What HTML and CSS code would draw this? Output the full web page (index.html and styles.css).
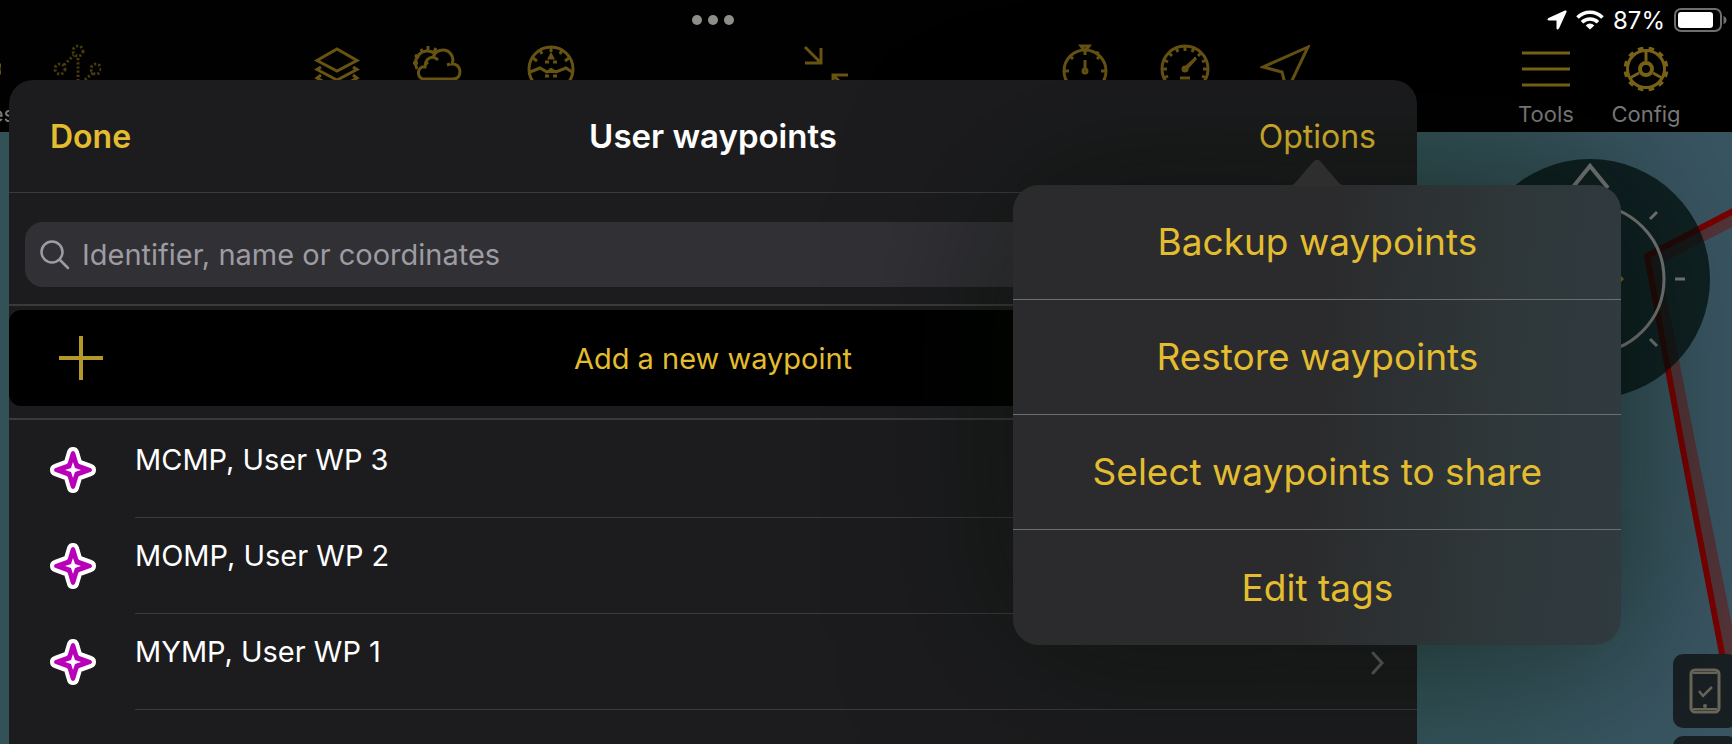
FILE: index.html
```html
<!DOCTYPE html>
<html lang="en">
<head>
    <meta charset="UTF-8">
    <meta name="viewport" content="width=device-width, initial-scale=1.0">
    <title>User waypoints</title>
    <link rel="stylesheet" href="styles.css">
</head>
<body>
    <div class="screen">
        <header class="topbar">
            <div class="status">
                <div class="dots"><span></span><span></span><span></span></div>
                <div class="status-right">
                    <svg width="20" height="20" viewBox="0 0 20 20"><path d="M18 .5 1.500 8Q-.5 9.500 1.500 10.500H9.500V18.500Q10 20.500 12 18.500L19.500 2Q20 0 18 .5Z" fill="#fff"/></svg>
                    <svg width="28" height="20" viewBox="0 0 28 20" fill="none" stroke="#fff" stroke-width="3.600">
                        <path d="M1.500 7.500a17.500 17.500 0 0 1 25 0M6 12.300a11.500 11.500 0 0 1 16 0"/>
                        <path d="M14 19.500 9.700 15.400a6 6 0 0 1 8.600 0Z" fill="#fff" stroke="none"/>
                    </svg>
                    <span class="percent">87%</span>
                    <svg width="54" height="24" viewBox="0 0 54 24">
                        <rect x="1" y="1" width="46" height="22" rx="6" fill="none" stroke="#6f6f6f" stroke-width="2"/>
                        <rect x="4" y="4" width="35" height="16" rx="3" fill="#fff"/>
                        <path d="M49.500 8v8q3-1 3-4t-3-4Z" fill="#6f6f6f"/>
                    </svg>
                </div>
            </div>

            <nav class="toolbar">
                <div class="group">
                    <button class="tool">
                        <svg viewBox="0 0 50 50"><circle cx="46" cy="25" r="5"/><circle cx="7" cy="40" r="5"/><path d="M11 37 41 27"/></svg>
                        Profiles
                    </button>
                    <button class="tool faded" aria-label="Procedures">
                        <svg viewBox="0 0 50 50" stroke-dasharray="2.200 2">
                            <circle cx="27" cy="7" r="5"/><circle cx="9" cy="25" r="5"/><circle cx="45" cy="25" r="5"/>
                            <path d="M13 21 23 11M27 14V48M42 29 29 40"/>
                        </svg>
                    </button>
                </div>
                <div class="group maps">
                    <button class="tool" aria-label="Layers">
                        <svg viewBox="0 0 50 50"><path d="M25 5 45 16.500 25 27 5 16.500ZM9 23l-4 2.500L25 36l20-10.500L41 23M9 31l-4 3L25 45l20-11-4-3"/></svg>
                    </button>
                    <button class="tool" aria-label="Weather">
                        <svg viewBox="0 0 50 50">
                            <path d="M11 35a6.500 6.500 0 0 1-1-12h3q0-9 8-10 3-7 10-7a10 10 0 0 1 9 14q7 0 8 7 0 8-7 8ZM13 23q0-3 3-5M21 13q3 1 5 3M38 20l-3 1" />
                            <path d="M5 25a12 12 0 0 1 17-16M1 19h5M3 11l4 3M9 5l2 4M16 2v6M24 4l-2 4"/>
                        </svg>
                    </button>
                    <button class="tool" aria-label="Synthetic vision">
                        <svg viewBox="0 0 50 50">
                            <circle cx="25" cy="25" r="22"/>
                            <path d="M25 3v5M14 6l2 4M36 6l-2 4M7 14l4 3M43 14l-4 3M4 28l10-4 7 4 4-2 5 2 10-4 6 4M19 18h4M27 18h4M19 32h4M27 32h4M25 24v5"/>
                            <path d="m25 11 1.500 3h-3Z"/>
                        </svg>
                    </button>
                </div>
                <div class="group">
                    <button class="tool" aria-label="Exit full screen">
                        <svg viewBox="0 0 50 50"><path d="M6 3 22 19M22 4V19H6M49 31H34V46M34 31 50 47"/></svg>
                    </button>
                </div>
                <div class="group">
                    <button class="tool" aria-label="Stopwatch">
                        <svg viewBox="0 0 50 50">
                            <circle cx="25" cy="27" r="21"/>
                            <path d="M25 6v5M4 27h5M46 27h-5M10 12l3 3M40 12l-3 3M36 8l3 2M25 16v8"/>
                            <path d="M21 2h8l-3 4h-2Z"/><circle cx="25" cy="27" r="2"/>
                        </svg>
                    </button>
                    <button class="tool" aria-label="Gauge">
                        <svg viewBox="0 0 50 50">
                            <circle cx="25" cy="25" r="23"/>
                            <path d="M25 2v5M16 4l2 4M34 4l-2 4M9 9l3 3M41 9l-3 3M4 16l4 2M46 16l-4 2M2 25h5M48 25h-5M4 34l4-2M46 34l-4-2M20 34h10"/>
                            <path d="M25 24 36 14 26 25Z"/><circle cx="25" cy="25" r="2"/>
                        </svg>
                    </button>
                    <button class="tool" aria-label="Direct to">
                        <svg viewBox="0 0 50 50"><path d="M48 3 3 23 22 28 27 47Z"/></svg>
                    </button>
                </div>
                <div class="group">
                    <button class="tool bright">
                        <svg viewBox="0 0 50 50"><path d="M1 9h48M1 25h48M1 41h48"/></svg>
                        Tools
                    </button>
                    <button class="tool bright">
                        <svg viewBox="0 0 50 50">
                            <circle cx="25" cy="25" r="18.500"/>
                            <circle cx="25" cy="25" r="20.500" stroke-width="4" pathLength="24" stroke-dasharray="1 1" stroke-dashoffset="1.500"/>
                            <circle cx="25" cy="25" r="6" stroke-width="4.500"/>
                            <path d="M25 17V7M32 29l9 5M18 29l-9 5"/>
                        </svg>
                        Config
                    </button>
                </div>
            </nav>
        </header>

        <main class="map">
            <svg class="chart" width="312" height="612" viewBox="1420 132 312 612">
                <path d="M1732 212 1646 256 1682 445 1728 685H1744L1694 436 1660 264 1732 227Z" fill="#533439"/>
                <path d="M1735 210 1647 256 1682 445 1728 685" fill="none" stroke="#790000" stroke-width="6"/>
                <circle cx="1590" cy="279" r="120" fill="#000d0b" fill-opacity=".72"/>
                <g fill="none" stroke="#777a79" stroke-width="3">
                    <circle cx="1590" cy="279" r="74"/>
                    <path d="M1675 279h10M1650 219l7-7M1650 339l7 7"/>
                    <path d="M1573 187 1590 166 1608 188" stroke-width="4"/>
                </g>
                <path d="m1620 275 4 4-4 4-4-4Z" fill="#7c6616"/>
            </svg>
            <div class="map-buttons">
                <button aria-label="Device">
                    <svg width="32" height="46" viewBox="0 0 32 46" fill="none" stroke="#6b675a" stroke-width="2">
                        <rect x="2" y="2" width="28" height="42" rx="4" stroke-width="3"/>
                        <path d="M4 5h24M4 41h24"/>
                        <path d="m10 23 4 5 9-9" stroke-width="2.500"/>
                        <circle cx="16" cy="38" r="2" fill="#6b675a" stroke="none"/>
                    </svg>
                </button>
                <button aria-label="Layers"></button>
            </div>
        </main>

        <section class="sheet">
            <div class="sheet-header">
                <button class="done">Done</button>
                <h1>User waypoints</h1>
                <div class="options">
                    <button>Options</button>
                    <div class="popover">
                        <svg class="arrow" width="60" height="27" viewBox="0 0 60 27"><path d="M0 27Q5 27 8 24L26 3Q30-2 34 3L52 24Q55 27 60 27Z" fill="#2e2e2f"/></svg>
                        <button>Backup waypoints</button>
                        <button>Restore waypoints</button>
                        <button>Select waypoints to share</button>
                        <button>Edit tags</button>
                    </div>
                </div>
            </div>

            <div class="search-row">
                <label class="search">
                    <svg width="30" height="30" viewBox="0 0 30 30" fill="none" stroke="#9d9ca3" stroke-width="2.500" stroke-linecap="round"><circle cx="12" cy="12" r="10.500"/><path d="M20 20 28 28"/></svg>
                    <input type="text" placeholder="Identifier, name or coordinates" aria-label="Search waypoints">
                </label>
            </div>

            <div class="add-row">
                <button class="add">
                    <svg width="44" height="44" viewBox="0 0 44 44" stroke="#b4982a" stroke-width="4"><path d="M22 0V44M0 22H44"/></svg>
                    <span>Add a new waypoint</span>
                </button>
            </div>

            <ul class="waypoints">
                <li>
                    <svg class="star" viewBox="0 0 46 46"><use href="#wp"/></svg>
                    <a href="#">MCMP, User WP 3 <svg class="chevron" viewBox="0 0 14 24"><path d="m2 2 9 10-9 10"/></svg></a>
                </li>
                <li>
                    <svg class="star" viewBox="0 0 46 46"><use href="#wp"/></svg>
                    <a href="#">MOMP, User WP 2 <svg class="chevron" viewBox="0 0 14 24"><path d="m2 2 9 10-9 10"/></svg></a>
                </li>
                <li>
                    <svg class="star" viewBox="0 0 46 46">
                        <g id="wp">
                            <path d="M23 2Q26 2 27 5L30 15 41 19Q44 20 44 23T41 27L30 31 27 41Q26 44 23 44T19 41L16 31 5 27Q2 26 2 23T5 19L16 15 19 5Q20 2 23 2Z" fill="#b800b8" stroke="#fff" stroke-width="4" stroke-linejoin="round"/>
                            <path d="m23 15 2 6 6 2-6 2-2 6-2-6-6-2 6-2Z" fill="#fff"/>
                        </g>
                    </svg>
                    <a href="#">MYMP, User WP 1 <svg class="chevron" viewBox="0 0 14 24"><path d="m2 2 9 10-9 10"/></svg></a>
                </li>
            </ul>
        </section>
    </div>
</body>
</html>
```
FILE: styles.css
```css
* {
    box-sizing: border-box;
}

body {
    margin: 0;
    background: #000;
    color: #fff;
    font-family: Inter, "Liberation Sans", sans-serif;
}

button {
    background: none;
    border: none;
    padding: 0;
    font: inherit;
    color: #e3bd2f;
    cursor: pointer;
}

svg {
    display: block;
    flex-shrink: 0;
}

.screen {
    position: relative;
    display: flex;
    flex-direction: column;
    min-height: 100vh;
    overflow: hidden;
}

/* status bar and toolbar */
.topbar {
    background: #000100;
}

.status {
    display: grid;
    grid-template-columns: 1fr 306px;
    align-items: center;
    height: 40px;
}

.dots {
    display: flex;
    justify-content: center;
    gap: 6px;
}

.dots span {
    width: 10px;
    height: 10px;
    border-radius: 50%;
    background: #8c8e8a;
}

.status-right {
    display: flex;
    align-items: center;
    justify-content: flex-end;
    gap: 9px;
    padding-right: 4px;
}

.percent {
    font-size: 24px;
}

.toolbar {
    display: flex;
    justify-content: space-between;
    height: 92px;
    margin-left: -74px;
    padding: 4px 36px 0 0;
}

.group {
    display: flex;
}

.maps {
    margin-right: 12px;
}

.maps .tool:last-child {
    margin-left: 14px;
}

.tool {
    display: flex;
    flex-direction: column;
    align-items: center;
    gap: 8px;
    width: 100px;
    font-size: 22px;
    line-height: 24px;
    color: #7c7c7c;
}

.tool svg {
    width: 50px;
    height: 50px;
    fill: none;
    stroke: #675312;
    stroke-width: 3px;
}

.tool.bright svg {
    stroke: #7a6318;
}

.tool svg circle[stroke-width] {
    stroke-width: 4px;
}

.faded svg {
    opacity: 0.7;
}

/* map */
.map {
    position: relative;
    flex: 1;
    background: linear-gradient(90deg, #335258 82%, #3a5663 98%);
}

.chart {
    position: absolute;
    top: 0;
    right: 0;
}

.map-buttons {
    position: absolute;
    right: -5px;
    bottom: -66px;
    display: flex;
    flex-direction: column;
    gap: 8px;
}

.map-buttons button {
    display: flex;
    align-items: center;
    justify-content: center;
    width: 64px;
    height: 74px;
    border-radius: 10px;
    background: #182024;
}

/* sheet */
.sheet {
    position: absolute;
    top: 80px;
    bottom: 0;
    left: 9px;
    right: 315px;
    border-radius: 24px 24px 0 0;
    background: #1c1c1e;
}

.sheet-header {
    display: grid;
    grid-template-columns: 1fr auto 1fr;
    align-items: center;
    height: 113px;
    padding: 0 41px;
    border-bottom: 1px solid #3a3a3c;
    font-size: 32px;
}

.sheet-header h1 {
    margin: 0;
    font-size: 33px;
    font-weight: 600;
}

.done {
    justify-self: start;
    font-weight: 600;
}

.options {
    position: relative;
    justify-self: end;
}

.popover {
    position: absolute;
    z-index: 1;
    top: 68px;
    left: 50%;
    width: 608px;
    transform: translateX(-50%);
    border-radius: 26px;
    background: linear-gradient(95deg, #2b2b2d 50%, #2e3638 75%, #303b40);
    box-shadow: 0 0 160px rgba(0, 14, 4, 0.6);
    font-size: 37px;
}

.popover button {
    display: block;
    width: 100%;
    height: 115px;
    border-bottom: 1px solid #6b6f70;
}

.popover button:last-child {
    border-bottom: none;
}

.arrow {
    position: absolute;
    top: -26px;
    left: 50%;
    transform: translateX(-50%);
}

.search-row {
    padding: 29px 16px 17px;
    border-bottom: 2px solid #3a3a3c;
}

.search {
    display: flex;
    align-items: center;
    gap: 12px;
    height: 65px;
    padding: 0 15px;
    border-radius: 18px;
    background: #313035;
}

.search input {
    flex: 1;
    min-width: 0;
    padding: 0;
    border: none;
    outline: none;
    background: none;
    font: inherit;
    font-size: 29px;
    color: #fff;
}

.search input::placeholder {
    color: #9d9ca3;
    opacity: 1;
}

.add-row {
    padding: 4px 0 12px;
    border-bottom: 2px solid #3a3a3c;
}

.add {
    display: grid;
    grid-template-columns: 44px 1fr 44px;
    align-items: center;
    width: 100%;
    height: 96px;
    padding: 0 50px;
    border-radius: 12px;
    background: #000;
    font-size: 29px;
}

.waypoints {
    margin: 0;
    padding: 2px 0 0;
    list-style: none;
}

.waypoints li {
    display: flex;
    align-items: center;
    gap: 39px;
    padding-left: 41px;
}

.star {
    width: 46px;
    height: 46px;
}

.waypoints a {
    display: flex;
    flex: 1;
    justify-content: space-between;
    height: 96px;
    padding: 20px 32px 0 0;
    border-bottom: 1px solid #3a3a3c;
    font-size: 29px;
    line-height: 36px;
    color: #fff;
    text-decoration: none;
}

.chevron {
    width: 14px;
    height: 24px;
    margin-top: 17px;
    fill: none;
    stroke: #5e5e61;
    stroke-width: 3px;
    stroke-linecap: round;
}
```
